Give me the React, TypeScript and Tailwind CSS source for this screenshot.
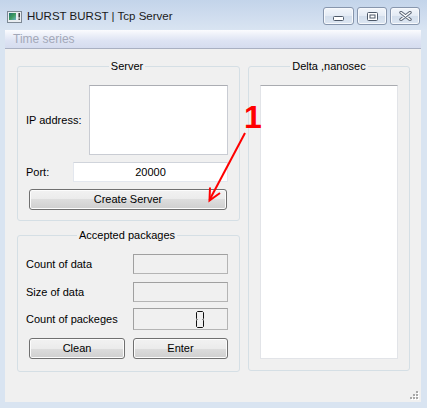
import React from "react";

const btn =
  "flex items-center justify-center rounded-[3px] border border-[#707070] bg-[linear-gradient(#f2f2f2_0%,#ebebeb_50%,#dddddd_50%,#cfcfcf_100%)] shadow-[inset_0_0_0_1px_#fcfcfc] text-[11px] text-black";

const lcd =
  "flex items-center justify-end w-[95px] ml-auto bg-[#f0f0f0] border border-[#a0a0a0] border-r-[#b4b4b4] border-b-[#b4b4b4]";

const capBtn =
  "flex items-center justify-center h-[18px] rounded-[3px] border border-[#8796ad] bg-[linear-gradient(#f3f6fb_0%,#e3eaf4_50%,#d3deec_51%,#dce6f2_100%)] shadow-[inset_0_0_0_1px_#f7f9fc]";

function WinIcon() {
  return (
    <svg width="15" height="12" viewBox="0 0 15 12">
      <defs>
        <linearGradient id="ig" x1="0" y1="0" x2="1" y2="1">
          <stop offset="0" stopColor="#1e6f77" />
          <stop offset="0.5" stopColor="#3f9a5c" />
          <stop offset="1" stopColor="#6bb3c9" />
        </linearGradient>
      </defs>
      <rect x="0.5" y="0.5" width="14" height="11" fill="#e9edf1" stroke="#7d8894" />
      <rect x="2" y="2" width="7" height="7" fill="url(#ig)" />
      <rect x="11.5" y="2" width="1.4" height="4.5" fill="#2a2a2a" />
      <rect x="11.5" y="7.5" width="1.4" height="1.4" fill="#2a2a2a" />
    </svg>
  );
}

function LcdZero() {
  return (
    <svg width="8" height="17" viewBox="0 0 8 17">
      <path
        d="M1.5 0.5 H6.5 L7.5 1.5 V7.5 L7 8.5 L7.5 9.5 V15.5 L6.5 16.5 H1.5 L0.5 15.5 V9.5 L1 8.5 L0.5 7.5 V1.5 Z"
        fill="none"
        stroke="#111"
        strokeWidth="1"
      />
    </svg>
  );
}

function TitleBar() {
  return (
    <div className="h-[30px] flex bg-[linear-gradient(#c3d4ea,#d9e4f2)] pl-[7px] pr-[7px]">
      <div className="flex items-center pt-[3px]">
        <WinIcon />
        <span className="ml-[5px] text-[11.5px] text-[#1a1a1a]">HURST BURST | Tcp Server</span>
      </div>
      <div className="ml-auto flex gap-[3px] pt-[7px]">
        <div className={capBtn + " w-[31px]"}>
          <svg width="12" height="6" viewBox="0 0 12 6" className="mt-[6px]">
            <rect x="0.5" y="0.5" width="10" height="4" rx="1" fill="#fff" stroke="#4d5868" />
          </svg>
        </div>
        <div className={capBtn + " w-[30px]"}>
          <svg width="11" height="9" viewBox="0 0 11 9">
            <rect x="0.5" y="0.5" width="10" height="8" rx="1" fill="#fff" stroke="#4d5868" />
            <rect x="3" y="3" width="5" height="3" fill="#fff" stroke="#4d5868" />
          </svg>
        </div>
        <div className={capBtn + " w-[30px]"}>
          <svg width="13" height="10" viewBox="0 0 13 10">
            <path d="M2 1.5 L11 8.5 M11 1.5 L2 8.5" stroke="#5c6676" strokeWidth="3.4" strokeLinecap="round" />
            <path d="M2 1.5 L11 8.5 M11 1.5 L2 8.5" stroke="#fff" strokeWidth="1.4" strokeLinecap="round" />
          </svg>
        </div>
      </div>
    </div>
  );
}

function Server() {
  return (
    <fieldset className="border border-[#d5dfe5] rounded-[3px] pt-[12px] pb-[10px] pl-[8px] pr-[11px]">
      <legend className="mx-auto px-[2px] text-[11px] leading-[13px]">Server</legend>
      <div className="flex items-center">
        <span className="text-[11px]">IP address:</span>
        <div className="ml-auto w-[139px] h-[70px] bg-white border border-[#c9ccd3] border-t-[#abadb3]" />
      </div>
      <div className="flex items-center mt-[7px]">
        <span className="text-[11px]">Port:</span>
        <div className="ml-auto w-[155px] h-[20px] bg-white border border-[#e3e7ee] border-t-[#d0d4db] flex items-center justify-center text-[11px]">
          20000
        </div>
      </div>
      <div className={btn + " h-[21px] mt-[7px] ml-[3px] mr-[1px]"}>Create Server</div>
    </fieldset>
  );
}

function Accepted() {
  return (
    <fieldset className="mt-[8px] border border-[#d5dfe5] rounded-[3px] pt-[12px] pb-[12px] pl-[8px] pr-[11px]">
      <legend className="mx-auto px-[2px] text-[11px] leading-[13px]">Accepted packages</legend>
      <div className="flex items-center h-[20px]">
        <span className="text-[11px]">Count of data</span>
        <div className={lcd + " h-[20px]"} />
      </div>
      <div className="flex items-center h-[20px] mt-[8px]">
        <span className="text-[11px]">Size of data</span>
        <div className={lcd + " h-[20px]"} />
      </div>
      <div className="flex items-center h-[22px] mt-[6px]">
        <span className="text-[11px]">Count of packeges</span>
        <div className={lcd + " h-[22px] pr-[23px]"}>
          <LcdZero />
        </div>
      </div>
      <div className="flex mt-[8px]">
        <div className={btn + " h-[21px] w-[96px] ml-[3px]"}>Clean</div>
        <div className={btn + " h-[21px] w-[95px] ml-auto"}>Enter</div>
      </div>
    </fieldset>
  );
}

function Delta() {
  return (
    <fieldset className="w-[162px] border border-[#d5dfe5] rounded-[3px] pt-[12px] pb-[11px] px-[11px]">
      <legend className="mx-auto px-[2px] text-[11px] leading-[13px]">Delta ,nanosec</legend>
      <div className="h-[274px] bg-white border border-[#e2e4e8] border-t-[#a9abb0]" />
    </fieldset>
  );
}

export default function App() {
  return (
    <div className="relative w-[427px] h-[408px] flex flex-col bg-[#d9e4f1] font-['Liberation_Sans',Arial,sans-serif] text-black overflow-hidden">
      <TitleBar />
      <div className="ml-[5px] mr-[6px] flex-1 flex flex-col">
        <div className="h-[19px] flex items-center pl-[8px] border-b border-[#a9b0c2] bg-[linear-gradient(#fbfcfe_0%,#eef1f9_25%,#dde3f3_60%,#d5dcef_100%)]">
          <span className="text-[12px] text-[#a3a8b8]">Time series</span>
        </div>
        <div className="relative flex-1 flex items-start gap-[8px] bg-[#f0f0f0] pl-[12px] pt-[11px]">
          <div className="w-[223px] flex flex-col">
            <Server />
            <Accepted />
          </div>
          <Delta />
          <svg width="9" height="9" viewBox="0 0 9 9" className="absolute right-[2px] bottom-[2px]">
            {[
              [6, 0],
              [3, 3],
              [6, 3],
              [0, 6],
              [3, 6],
              [6, 6],
            ].map(([x, y], i) => (
              <g key={i}>
                <rect x={x + 1} y={y + 1} width="2" height="2" fill="#ffffff" />
                <rect x={x} y={y} width="2" height="2" fill="#a8a8a8" />
              </g>
            ))}
          </svg>
        </div>
      </div>
      <div className="h-[6px]" />

      {/* annotation */}
      <span className="absolute left-[244px] top-[101px] text-[32px] leading-[32px] font-bold text-[#ff0000] pointer-events-none">
        1
      </span>
      <svg className="absolute inset-0 pointer-events-none" width="427" height="408" viewBox="0 0 427 408">
        <path d="M245 133 L209.5 200" stroke="#ff0000" strokeWidth="2" fill="none" />
        <path d="M210 187.5 L209.5 200.5 L220 193" stroke="#ff0000" strokeWidth="2" fill="none" strokeLinejoin="miter" />
      </svg>
    </div>
  );
}
